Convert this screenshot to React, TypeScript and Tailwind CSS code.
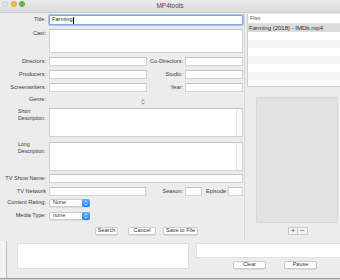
import React from "react";

const font = "font-['Liberation_Sans',Arial,sans-serif]";

function Field({ className = "" }: { className?: string }) {
  return <div className={`bg-white border border-[#d2d2d2] border-t-[#c2c2c2] ${className}`} />;
}

function Label({ children, className = "" }: { children: React.ReactNode; className?: string }) {
  return (
    <div className={`w-[47px] shrink-0 pr-[1px] text-right leading-none whitespace-nowrap ${className}`}>
      {children}
    </div>
  );
}

function Chevrons({ color }: { color: string }) {
  return (
    <svg width="4" height="6" viewBox="0 0 4 6" className="block">
      <path d="M0.6 2.2 L2 0.8 L3.4 2.2 M0.6 3.8 L2 5.2 L3.4 3.8" fill="none" stroke={color} strokeWidth="0.8" />
    </svg>
  );
}

function Popup({ value }: { value: string }) {
  return (
    <div className="ml-[2px] flex h-[8px] w-[41px] items-center justify-between rounded-[2px] border border-[#cdcdcd] bg-white shadow-[0_0.5px_0.5px_rgba(0,0,0,0.12)]">
      <span className="pl-[3px] text-[5.5px] leading-none">{value}</span>
      <span className="-mr-px flex h-[8px] w-[8px] items-center justify-center rounded-[2px] bg-gradient-to-b from-[#69aefa] to-[#1c7df5]">
        <Chevrons color="#ffffff" />
      </span>
    </div>
  );
}

function MacButton({ children, className = "" }: { children: React.ReactNode; className?: string }) {
  return (
    <div
      className={`flex h-[8px] items-center justify-center rounded-[2px] border border-[#cbcbcb] bg-white text-[5.5px] leading-none text-[#333] shadow-[0_0.5px_0.5px_rgba(0,0,0,0.15)] ${className}`}
    >
      {children}
    </div>
  );
}

function TextArea({ className = "" }: { className?: string }) {
  return (
    <div className={`flex border border-[#d2d2d2] border-t-[#c2c2c2] bg-white ${className}`}>
      <div className="flex-1" />
      <div className="w-[6px] border-l border-[#e4e4e4] bg-[#fafafa]" />
    </div>
  );
}

export default function App() {
  const rows = Array.from({ length: 7 });
  return (
    <div className={`flex h-[280px] w-[340px] flex-col overflow-hidden bg-[#ececec] text-[5.6px] text-[#3a3a3a] ${font}`}>
      {/* title bar */}
      <div className="relative flex h-[13px] shrink-0 items-center justify-center border-b border-[#cbcbcb] bg-gradient-to-b from-[#ebebeb] to-[#dcdcdc]">
        <div className="absolute left-[2px] top-[1px] flex gap-[2.5px]">
          <span className="h-[6px] w-[6px] rounded-full border border-[#cfcfcf] bg-[#e3e3e3]" />
          <span className="h-[6px] w-[6px] rounded-full border border-[#dea136] bg-[#f6be4f]" />
          <span className="h-[6px] w-[6px] rounded-full border border-[#4fa93f] bg-[#60c453]" />
        </div>
        <span className="text-[6.5px] text-[#4a4a4a]">MP4tools</span>
      </div>

      {/* middle */}
      <div className="flex h-[228px] shrink-0">
        {/* sheet */}
        <div className="flex w-[245px] shrink-0 flex-col border-r border-[#d9d9d9] bg-[#ececec] pr-[1px]">
          <div className="mt-[2px] flex h-[10px] items-center">
            <Label>Title:</Label>
            <div className="ml-[2px] flex h-[10px] flex-1 items-center rounded-[1px] border border-[#7aa7e9] bg-white pl-[2px] shadow-[0_0_0_1px_rgba(120,165,235,0.55)]">
              <span className="leading-none text-[#222]">Farming</span>
              <span className="ml-[0.5px] h-[7px] w-px bg-black" />
            </div>
          </div>

          <div className="mt-[4px] flex h-[24px] items-start">
            <Label className="pt-[2px]">Cast:</Label>
            <Field className="ml-[2px] h-[24px] flex-1" />
          </div>

          <div className="mt-[4px] flex h-[9px] items-center">
            <Label>Directors:</Label>
            <Field className="ml-[2px] h-[9px] w-[98px]" />
            <div className="ml-[3px] w-[33px] text-right leading-none whitespace-nowrap">Co-Directors:</div>
            <Field className="ml-[2px] h-[9px] flex-1" />
          </div>

          <div className="mt-[4px] flex h-[9px] items-center">
            <Label>Producers:</Label>
            <Field className="ml-[2px] h-[9px] w-[98px]" />
            <div className="ml-[3px] w-[33px] text-right leading-none">Studio:</div>
            <Field className="ml-[2px] h-[9px] flex-1" />
          </div>

          <div className="mt-[4px] flex h-[9px] items-center">
            <Label>Screenwriters:</Label>
            <Field className="ml-[2px] h-[9px] w-[98px]" />
            <div className="ml-[3px] w-[33px] text-right leading-none">Year:</div>
            <Field className="ml-[2px] h-[9px] flex-1" />
          </div>

          <div className="mt-[4px] flex h-[8px] items-center">
            <Label>Genre:</Label>
            <div className="ml-[94px] mt-[3px]">
              <Chevrons color="#6a6a6a" />
            </div>
          </div>

          <div className="mt-[4px] flex h-[29px] items-start">
            <div className="w-[47px] shrink-0 pl-[18px] text-[5.2px] leading-[7px] whitespace-nowrap">
              Short
              <br />
              Description:
            </div>
            <TextArea className="ml-[2px] h-[29px] flex-1" />
          </div>

          <div className="mt-[5px] flex h-[29px] items-start">
            <div className="-mt-[1px] w-[47px] shrink-0 pl-[18px] text-[5.2px] leading-[7px] whitespace-nowrap">
              Long
              <br />
              Description:
            </div>
            <TextArea className="ml-[2px] h-[29px] flex-1" />
          </div>

          <div className="mt-[3px] flex h-[9px] items-center">
            <Label>TV Show Name:</Label>
            <Field className="ml-[2px] h-[9px] flex-1" />
          </div>

          <div className="mt-[4px] flex h-[9px] items-center">
            <Label>TV Network</Label>
            <Field className="ml-[2px] h-[9px] w-[97px]" />
            <div className="ml-[4px] w-[33px] text-right leading-none">Season:</div>
            <Field className="ml-[2px] h-[9px] w-[17px]" />
            <div className="ml-[4px] w-[21px] leading-none whitespace-nowrap">Episode:</div>
            <Field className="ml-[1px] h-[9px] flex-1" />
          </div>

          <div className="mt-[3px] flex h-[8px] items-center">
            <Label>Content Rating:</Label>
            <Popup value="None" />
          </div>

          <div className="mt-[5px] flex h-[8px] items-center">
            <Label>Media Type:</Label>
            <Popup value="none" />
          </div>

          <div className="mt-[7px] flex h-[8px] items-center">
            <MacButton className="ml-[95px] w-[23px]">Search</MacButton>
            <MacButton className="ml-[10px] w-[28px]">Cancel</MacButton>
            <MacButton className="ml-[7px] w-[35px]">Save to File</MacButton>
          </div>
        </div>

        {/* right panel */}
        <div className="flex flex-1 flex-col">
          <div className="ml-[2px] mt-[1px] flex h-[73px] flex-col overflow-hidden border-b border-l border-[#d0d0d0] bg-white">
            <div className="flex h-[10px] shrink-0 items-center border-b border-[#e2e2e2] pl-[2px] text-[5px] text-[#555]">
              Files
            </div>
            <div className="flex h-[8px] shrink-0 items-center bg-[#dcdcdc] pl-[1px] text-[6px] leading-none whitespace-nowrap text-[#2a2a2a]">
              Farming (2018) - IMDb.mp4
            </div>
            {rows.map((_, i) => (
              <div key={i} className={`h-[8px] shrink-0 ${i % 2 === 0 ? "bg-white" : "bg-[#f4f5f5]"}`} />
            ))}
          </div>

          <div className="ml-[11px] mt-[10px] h-[126px] w-[82px] rounded-[1px] border border-[#d7d7d7] bg-[#e3e3e3] shadow-[inset_0_1px_1px_rgba(0,0,0,0.04)]" />

          <div className="ml-[43px] mt-[4px] flex">
            <div className="flex h-[8px] w-[10px] items-center justify-center border border-[#c9c9c9] bg-[#f4f4f4] text-[8px] leading-none text-[#555]">+</div>
            <div className="flex h-[8px] w-[10px] items-center justify-center border border-l-0 border-[#c9c9c9] bg-[#f4f4f4] text-[8px] leading-none text-[#555]">−</div>
          </div>
        </div>
      </div>

      {/* bottom of main window */}
      <div className="flex h-[37px] shrink-0">
        <div className="w-[6px] shrink-0 bg-[#f3f3f3]" />
        <div className="w-px shrink-0 bg-[#bcbcbc]" />
        <div className="flex flex-1 bg-[#ececec] pt-[2px]">
          <div className="ml-[10px] h-[26px] w-[172px] border border-[#e0e0e0] bg-white" />
          <div className="ml-[7px] flex flex-1 flex-col">
            <div className="h-[15px] border border-r-0 border-[#e0e0e0] bg-white" />
            <div className="mt-[3px] flex">
              <MacButton className="ml-[37px] w-[33px]">Clear</MacButton>
              <MacButton className="ml-[18px] w-[33px]">Pause</MacButton>
            </div>
          </div>
        </div>
      </div>
      <div className="h-px shrink-0 bg-[#9c9c9c]" />
      <div className="flex-1 bg-[#d6d6d6]" />
    </div>
  );
}
